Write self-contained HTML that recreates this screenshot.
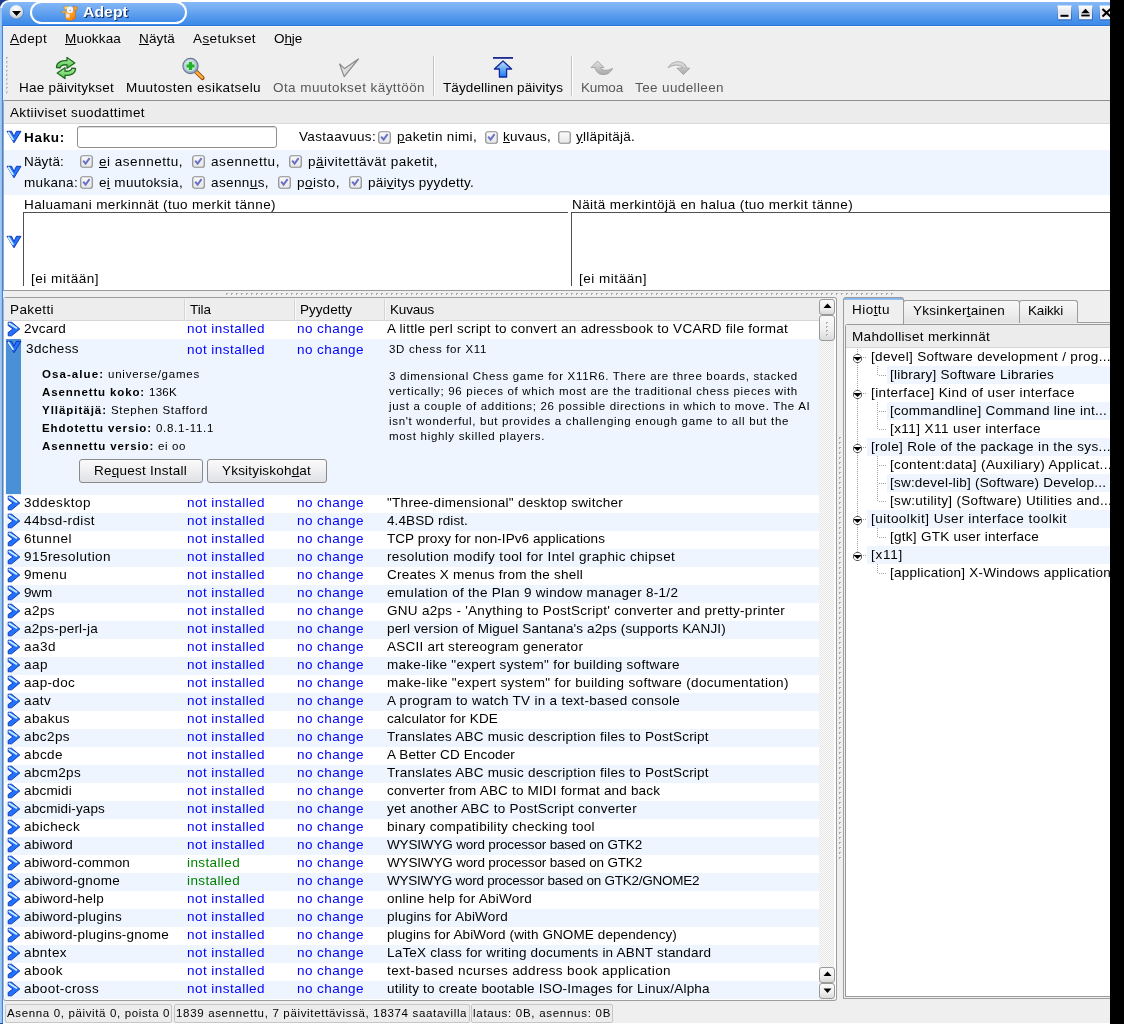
<!DOCTYPE html>
<html><head><meta charset="utf-8"><title>Adept</title>
<style>
html,body{margin:0;padding:0}
body{width:1124px;height:1024px;position:relative;overflow:hidden;background:#000;font-family:"Liberation Sans",sans-serif;color:#000}
.t{position:absolute;white-space:nowrap;line-height:1;will-change:transform}
u{text-decoration:underline;text-underline-offset:1px}
</style></head><body>

<div style="position:absolute;left:0px;top:0px;width:1110px;height:1024px;background:#fff"></div>
<div style="position:absolute;left:0px;top:0px;width:9px;height:9px;background:#1b3c8c"></div>
<div style="position:absolute;left:0px;top:0px;width:1110px;height:1024px;background:#ffffff;border-top-left-radius:9px"></div>
<div style="position:absolute;left:0px;top:8px;width:3px;height:1016px;background:linear-gradient(to right,#a9cdf6 0,#8cbcf4 2px,#3a86e6 2px,#3a86e6 3px)"></div>
<div style="position:absolute;left:2px;top:2px;width:1108px;height:24px;background:linear-gradient(to bottom,#86b8f6 0%,#72acf2 30%,#5a9ced 55%,#4690ea 80%,#3a88e8 100%);border-top-left-radius:7px"></div>
<div style="position:absolute;left:2px;top:25px;width:1108px;height:1px;background:#2e76d6"></div>
<div style="position:absolute;left:3px;top:26px;width:1107px;height:997px;background:#efefef"></div>
<div style="position:absolute;left:3px;top:26px;width:1107px;height:1px;background:#f7f7f7"></div>
<div style="position:absolute;left:0px;top:1023px;width:3px;height:1px;background:#1b4ea6"></div>
<svg style="position:absolute;left:8px;top:4px" width="18" height="18" viewBox="0 0 18 18"><defs><radialGradient id="mb" cx="45%" cy="30%" r="70%"><stop offset="0" stop-color="#ffffff"/><stop offset="0.6" stop-color="#e6e8ec"/><stop offset="1" stop-color="#b8bcc6"/></radialGradient></defs><circle cx="8.6" cy="8.4" r="7.2" fill="#3b6fb8" opacity="0.5"/><circle cx="8.3" cy="7.9" r="6.8" fill="url(#mb)"/><path d="M4 7 L13 7 L8.5 12 Z" fill="#000"/></svg>
<div style="position:absolute;left:30px;top:1px;width:157px;height:23px;box-sizing:border-box;border:2px solid #fff;border-radius:11.5px;background:linear-gradient(to bottom,#84b6f6 0%,#64a3ef 50%,#428ceb 100%)"></div>
<svg style="position:absolute;left:58px;top:2px" width="24" height="20" viewBox="0 0 24 20"><defs><linearGradient id="ob" x1="0" y1="0" x2="1" y2="1"><stop offset="0" stop-color="#ffd070"/><stop offset="0.5" stop-color="#ff9a20"/><stop offset="1" stop-color="#f07000"/></linearGradient></defs><g stroke="#8a5a20" stroke-width="0.5" stroke-opacity="0.6"><path d="M3 9.6 L7.5 8.6 L8.5 11 L3.5 10.6 Z" fill="#ffc050"/><path d="M5.5 5 L9.5 3.5 L10.5 6.5 L7 8 Z" fill="#ffd060"/><path d="M15 3.8 L19.5 5.2 L18.5 9 L16 8.5 Z" fill="#ff9a20"/><path d="M7 9.8 L17.5 8.8 L17.5 16.5 L12.5 19 L7.5 17.2 Z" fill="url(#ob)"/></g><circle cx="12" cy="7.8" r="3.3" fill="#f4f2f8"/><circle cx="12.2" cy="8.4" r="0.8" fill="#b8b0a0"/><rect x="8.3" y="12" width="3.2" height="3.6" fill="#e8e6f6"/></svg>
<div class="t" style="left:83px;top:5px;font-size:14px;font-weight:bold;color:#fff;text-shadow:1px 1px 0 #10306a;transform:scaleX(1.13);transform-origin:0 0">Adept</div>
<svg style="position:absolute;left:1057px;top:5px" width="16" height="16" viewBox="0 0 16 16"><defs><linearGradient id="tbmin" x1="0" y1="0" x2="0" y2="1"><stop offset="0" stop-color="#ffffff"/><stop offset="0.5" stop-color="#e4e6ea"/><stop offset="1" stop-color="#f6f7f9"/></linearGradient></defs><rect x="0.5" y="1" width="14.5" height="14.5" rx="1.5" fill="#244f9a" opacity="0.55"/><path d="M0.5 0.5 L14.5 0.5 L13.8 14.2 L1.2 14.2 Z" fill="url(#tbmin)"/><rect x="3.5" y="9.8" width="8" height="2" fill="#000"/></svg>
<svg style="position:absolute;left:1078px;top:5px" width="16" height="16" viewBox="0 0 16 16"><defs><linearGradient id="tbmax" x1="0" y1="0" x2="0" y2="1"><stop offset="0" stop-color="#ffffff"/><stop offset="0.5" stop-color="#e4e6ea"/><stop offset="1" stop-color="#f6f7f9"/></linearGradient></defs><rect x="0.5" y="1" width="14.5" height="14.5" rx="1.5" fill="#244f9a" opacity="0.55"/><path d="M0.5 0.5 L14.5 0.5 L13.8 14.2 L1.2 14.2 Z" fill="url(#tbmax)"/><path d="M3.3 8.2 L7.5 3.8 L11.7 8.2 Z" fill="#000"/><rect x="3.3" y="9.6" width="8.4" height="1.8" fill="#000"/></svg>
<svg style="position:absolute;left:1099px;top:5px" width="16" height="16" viewBox="0 0 16 16"><defs><linearGradient id="tbclose" x1="0" y1="0" x2="0" y2="1"><stop offset="0" stop-color="#ffffff"/><stop offset="0.5" stop-color="#e4e6ea"/><stop offset="1" stop-color="#f6f7f9"/></linearGradient></defs><rect x="0.5" y="1" width="14.5" height="14.5" rx="1.5" fill="#244f9a" opacity="0.55"/><path d="M0.5 0.5 L14.5 0.5 L13.8 14.2 L1.2 14.2 Z" fill="url(#tbclose)"/><path d="M3.5 4 L11.5 11.5 M11.5 4 L3.5 11.5" stroke="#000" stroke-width="2.2"/></svg>
<div class="t" style="left:10px;top:32px;font-size:13.5px;letter-spacing:0.34px"><u>A</u>dept</div>
<div class="t" style="left:65px;top:32px;font-size:13.5px;letter-spacing:0.18px"><u>M</u>uokkaa</div>
<div class="t" style="left:139px;top:32px;font-size:13.5px;letter-spacing:0.15px"><u>N</u>äytä</div>
<div class="t" style="left:193px;top:32px;font-size:13.5px;letter-spacing:0.41px">A<u>s</u>etukset</div>
<div class="t" style="left:274px;top:32px;font-size:13.5px;letter-spacing:-0.13px">O<u>h</u>je</div>
<svg style="position:absolute;left:6px;top:57px" width="2" height="38" viewBox="0 0 2 38"><defs><pattern id="hd" width="2" height="4.3" patternUnits="userSpaceOnUse"><rect width="2" height="2" fill="#b0b0b0"/><rect x="1" y="1" width="1" height="1" fill="#fff"/></pattern></defs><rect width="2" height="38" fill="url(#hd)"/></svg>
<div class="t" style="left:19px;top:81px;font-size:13.5px;letter-spacing:0.23px">Hae päivitykset</div>
<div class="t" style="left:126px;top:81px;font-size:13.5px;letter-spacing:0.41px">Muutosten esikatselu</div>
<div class="t" style="left:273px;top:81px;font-size:13.5px;letter-spacing:0.43px;color:#585858">Ota muutokset käyttöön</div>
<div class="t" style="left:443px;top:81px;font-size:13.5px;letter-spacing:0.11px">Täydellinen päivitys</div>
<div class="t" style="left:581px;top:81px;font-size:13.5px;letter-spacing:-0.15px;color:#585858">Kumoa</div>
<div class="t" style="left:635px;top:81px;font-size:13.5px;letter-spacing:0.38px;color:#585858">Tee uudelleen</div>
<div style="position:absolute;left:433px;top:56px;width:1px;height:40px;background:#c4c4c4;box-shadow:1px 0 0 #fff"></div>
<div style="position:absolute;left:571px;top:56px;width:1px;height:40px;background:#c4c4c4;box-shadow:1px 0 0 #fff"></div>
<div style="position:absolute;left:3px;top:100px;width:1107px;height:1px;background:#a8a8a8"></div>
<svg style="position:absolute;left:54px;top:56px" width="24" height="24" viewBox="0 0 24 24"><defs><linearGradient id="sy" x1="0" y1="0" x2="0" y2="1"><stop offset="0" stop-color="#b6f0ac"/><stop offset="1" stop-color="#4cc444"/></linearGradient></defs><path d="M2.5 11.5 C2.5 6 8 4.2 13 4.6 L13 1.5 L20.8 7 L13 12.2 L13 8.8 C9 8.6 6.2 9.6 6.2 11.8 Z" fill="url(#sy)" stroke="#1f6a1f" stroke-width="1.3" stroke-linejoin="round"/><path d="M21.5 12.5 C21.5 18 16 19.8 11 19.4 L11 22.5 L3.2 17 L11 11.8 L11 15.2 C15 15.4 17.8 14.4 17.8 12.2 Z" fill="url(#sy)" stroke="#1f6a1f" stroke-width="1.3" stroke-linejoin="round"/></svg>
<svg style="position:absolute;left:181px;top:56px" width="25" height="25" viewBox="0 0 25 25"><defs><radialGradient id="lg" cx="40%" cy="35%" r="65%"><stop offset="0" stop-color="#eef4ff"/><stop offset="1" stop-color="#8ea6c8"/></radialGradient></defs><path d="M14.5 15 L21.5 22" stroke="#9a4a10" stroke-width="4.2" stroke-linecap="round"/><path d="M14.8 15.3 L21.2 21.7" stroke="#ffae3a" stroke-width="2.4" stroke-linecap="round"/><circle cx="9.5" cy="10" r="7.6" fill="url(#lg)" stroke="#6a7a8e" stroke-width="1.2"/><circle cx="9.5" cy="10" r="5.2" fill="#bfe8c8"/><path d="M9.5 6 V14 M5.5 10 H13.5" stroke="#22b02a" stroke-width="3.2"/></svg>
<svg style="position:absolute;left:337px;top:57px" width="24" height="22" viewBox="0 0 24 22"><defs><linearGradient id="ck" x1="0" y1="0" x2="1" y2="1"><stop offset="0" stop-color="#f2f0f2"/><stop offset="1" stop-color="#c8c6c8"/></linearGradient></defs><path d="M2.6 7 L7.6 11.6 L21.4 2 L7.2 19.6 Z" fill="url(#ck)" stroke="#8c8c8c" stroke-width="1.2" stroke-linejoin="round"/></svg>
<svg style="position:absolute;left:492px;top:56px" width="22" height="23" viewBox="0 0 22 23"><defs><linearGradient id="up" x1="0" y1="0" x2="0" y2="1"><stop offset="0" stop-color="#bfe0ff"/><stop offset="1" stop-color="#1a7af0"/></linearGradient></defs><rect x="1" y="1" width="20" height="1.8" fill="#1a2a90"/><path d="M11 5 L19.6 13 L14.6 13 L14.6 21 L7.4 21 L7.4 13 L2.4 13 Z" fill="url(#up)" stroke="#14289a" stroke-width="1.3" stroke-linejoin="round"/></svg>
<svg style="position:absolute;left:590px;top:59px" width="24" height="18" viewBox="0 0 24 18"><defs><linearGradient id="ud" x1="0" y1="0" x2="0" y2="1"><stop offset="0" stop-color="#e4e2e4"/><stop offset="1" stop-color="#a8a8a8"/></linearGradient></defs><path d="M7.5 2 L14 8.6 L10.4 8.6 C12 11.5 16 12.5 22.6 9.4 C20.5 14 16.5 15.8 12.5 15.6 C8 15.2 5.8 12 5 8.6 L1 8.6 Z" fill="url(#ud)" stroke="#9a9a9a" stroke-width="0.8" stroke-linejoin="round"/></svg>
<svg style="position:absolute;left:667px;top:59px" width="24" height="18" viewBox="0 0 24 18"><defs><linearGradient id="rd" x1="0" y1="0" x2="0" y2="1"><stop offset="0" stop-color="#e4e2e4"/><stop offset="1" stop-color="#a8a8a8"/></linearGradient></defs><path d="M1.2 8.6 C4 3 12 0.5 17.5 5 C19 6.5 19.4 8 19.6 9.2 L22.8 9.2 L16.4 15.6 L10 9.2 L15.5 9.2 C14 6 8 4.5 1.2 8.6 Z" fill="url(#rd)" stroke="#9a9a9a" stroke-width="0.8" stroke-linejoin="round"/></svg>
<div style="position:absolute;left:3px;top:100px;width:1107px;height:191px;box-sizing:border-box;border-top:1px solid #8e8e8e;border-left:1px solid #a5a5a5;border-bottom:1px solid #9a9a9a;background:#fff;border-top-left-radius:3px"></div>
<div style="position:absolute;left:4px;top:101px;width:1106px;height:22px;background:#ececec"></div>
<div style="position:absolute;left:4px;top:123px;width:1106px;height:1px;background:#d9d9d9"></div>
<div class="t" style="left:10px;top:106px;font-size:13.5px;letter-spacing:0.37px">Aktiiviset suodattimet</div>
<div style="position:absolute;left:4px;top:150px;width:1106px;height:45px;background:#eef5fe"></div>
<svg style="position:absolute;left:6px;top:130px" width="16" height="14" viewBox="0 0 16 14"><path d="M1 1.3 L5.6 1.3 L8 6.4 L10.4 1.3 L15 1.3 L8 12.8 Z" fill="#1f73ff" stroke="#0e2fb0" stroke-width="0.9" stroke-linejoin="round"/><path d="M2.6 2.4 L6.9 9.2" stroke="#d2f2ff" stroke-width="1.8" stroke-linecap="round"/></svg>
<div class="t" style="left:24px;top:131px;font-size:13.5px;letter-spacing:0.70px;font-weight:bold">Haku:</div>
<div style="position:absolute;left:77px;top:126px;width:200px;height:22px;box-sizing:border-box;border:1px solid #8f8f8f;border-radius:3px;background:#fff;box-shadow:inset 0 1px 0 #dcdcdc"></div>
<div class="t" style="left:299px;top:130px;font-size:13.5px;letter-spacing:0.34px">Vastaavuus:</div>
<svg style="position:absolute;left:378px;top:131px" width="13" height="13" viewBox="0 0 13 13"><defs><linearGradient id="cbg" x1="0" y1="0" x2="0" y2="1"><stop offset="0" stop-color="#fbfbfb"/><stop offset="1" stop-color="#e6e6e6"/></linearGradient></defs><rect x="0.75" y="0.75" width="11.5" height="11.5" rx="2" fill="url(#cbg)" stroke="#8c8c8c" stroke-width="1.2"/><path d="M3.2 5.6 L5.6 8.6 L9.6 3.2" fill="none" stroke="#6a70c8" stroke-width="2"/></svg>
<div class="t" style="left:397px;top:130px;font-size:13.5px;letter-spacing:0.32px"><u>p</u>aketin nimi,</div>
<svg style="position:absolute;left:485px;top:131px" width="13" height="13" viewBox="0 0 13 13"><defs><linearGradient id="cbg" x1="0" y1="0" x2="0" y2="1"><stop offset="0" stop-color="#fbfbfb"/><stop offset="1" stop-color="#e6e6e6"/></linearGradient></defs><rect x="0.75" y="0.75" width="11.5" height="11.5" rx="2" fill="url(#cbg)" stroke="#8c8c8c" stroke-width="1.2"/><path d="M3.2 5.6 L5.6 8.6 L9.6 3.2" fill="none" stroke="#6a70c8" stroke-width="2"/></svg>
<div class="t" style="left:503px;top:130px;font-size:13.5px;letter-spacing:0.21px"><u>k</u>uvaus,</div>
<svg style="position:absolute;left:558px;top:131px" width="13" height="13" viewBox="0 0 13 13"><defs><linearGradient id="cbg" x1="0" y1="0" x2="0" y2="1"><stop offset="0" stop-color="#fbfbfb"/><stop offset="1" stop-color="#e6e6e6"/></linearGradient></defs><rect x="0.75" y="0.75" width="11.5" height="11.5" rx="2" fill="url(#cbg)" stroke="#8c8c8c" stroke-width="1.2"/></svg>
<div class="t" style="left:576px;top:130px;font-size:13.5px;letter-spacing:0.25px"><u>y</u>lläpitäjä.</div>
<svg style="position:absolute;left:6px;top:165px" width="16" height="14" viewBox="0 0 16 14"><path d="M1 1.3 L5.6 1.3 L8 6.4 L10.4 1.3 L15 1.3 L8 12.8 Z" fill="#1f73ff" stroke="#0e2fb0" stroke-width="0.9" stroke-linejoin="round"/><path d="M2.6 2.4 L6.9 9.2" stroke="#d2f2ff" stroke-width="1.8" stroke-linecap="round"/></svg>
<div class="t" style="left:24px;top:155px;font-size:13.5px;letter-spacing:0.16px">Näytä:</div>
<div class="t" style="left:24px;top:176px;font-size:13.5px;letter-spacing:0.32px">mukana:</div>
<svg style="position:absolute;left:80px;top:155px" width="13" height="13" viewBox="0 0 13 13"><defs><linearGradient id="cbg" x1="0" y1="0" x2="0" y2="1"><stop offset="0" stop-color="#fbfbfb"/><stop offset="1" stop-color="#e6e6e6"/></linearGradient></defs><rect x="0.75" y="0.75" width="11.5" height="11.5" rx="2" fill="url(#cbg)" stroke="#8c8c8c" stroke-width="1.2"/><path d="M3.2 5.6 L5.6 8.6 L9.6 3.2" fill="none" stroke="#6a70c8" stroke-width="2"/></svg>
<div class="t" style="left:99px;top:155px;font-size:13.5px;letter-spacing:0.52px"><u>e</u>i asennettu,</div>
<svg style="position:absolute;left:192px;top:155px" width="13" height="13" viewBox="0 0 13 13"><defs><linearGradient id="cbg" x1="0" y1="0" x2="0" y2="1"><stop offset="0" stop-color="#fbfbfb"/><stop offset="1" stop-color="#e6e6e6"/></linearGradient></defs><rect x="0.75" y="0.75" width="11.5" height="11.5" rx="2" fill="url(#cbg)" stroke="#8c8c8c" stroke-width="1.2"/><path d="M3.2 5.6 L5.6 8.6 L9.6 3.2" fill="none" stroke="#6a70c8" stroke-width="2"/></svg>
<div class="t" style="left:211px;top:155px;font-size:13.5px;letter-spacing:0.60px">asennettu,</div>
<svg style="position:absolute;left:289px;top:155px" width="13" height="13" viewBox="0 0 13 13"><defs><linearGradient id="cbg" x1="0" y1="0" x2="0" y2="1"><stop offset="0" stop-color="#fbfbfb"/><stop offset="1" stop-color="#e6e6e6"/></linearGradient></defs><rect x="0.75" y="0.75" width="11.5" height="11.5" rx="2" fill="url(#cbg)" stroke="#8c8c8c" stroke-width="1.2"/><path d="M3.2 5.6 L5.6 8.6 L9.6 3.2" fill="none" stroke="#6a70c8" stroke-width="2"/></svg>
<div class="t" style="left:308px;top:155px;font-size:13.5px;letter-spacing:0.49px">p<u>ä</u>ivitettävät paketit,</div>
<svg style="position:absolute;left:80px;top:176px" width="13" height="13" viewBox="0 0 13 13"><defs><linearGradient id="cbg" x1="0" y1="0" x2="0" y2="1"><stop offset="0" stop-color="#fbfbfb"/><stop offset="1" stop-color="#e6e6e6"/></linearGradient></defs><rect x="0.75" y="0.75" width="11.5" height="11.5" rx="2" fill="url(#cbg)" stroke="#8c8c8c" stroke-width="1.2"/><path d="M3.2 5.6 L5.6 8.6 L9.6 3.2" fill="none" stroke="#6a70c8" stroke-width="2"/></svg>
<div class="t" style="left:99px;top:176px;font-size:13.5px;letter-spacing:0.34px">e<u>i</u> muutoksia,</div>
<svg style="position:absolute;left:192px;top:176px" width="13" height="13" viewBox="0 0 13 13"><defs><linearGradient id="cbg" x1="0" y1="0" x2="0" y2="1"><stop offset="0" stop-color="#fbfbfb"/><stop offset="1" stop-color="#e6e6e6"/></linearGradient></defs><rect x="0.75" y="0.75" width="11.5" height="11.5" rx="2" fill="url(#cbg)" stroke="#8c8c8c" stroke-width="1.2"/><path d="M3.2 5.6 L5.6 8.6 L9.6 3.2" fill="none" stroke="#6a70c8" stroke-width="2"/></svg>
<div class="t" style="left:211px;top:176px;font-size:13.5px;letter-spacing:0.40px">asenn<u>u</u>s,</div>
<svg style="position:absolute;left:278px;top:176px" width="13" height="13" viewBox="0 0 13 13"><defs><linearGradient id="cbg" x1="0" y1="0" x2="0" y2="1"><stop offset="0" stop-color="#fbfbfb"/><stop offset="1" stop-color="#e6e6e6"/></linearGradient></defs><rect x="0.75" y="0.75" width="11.5" height="11.5" rx="2" fill="url(#cbg)" stroke="#8c8c8c" stroke-width="1.2"/><path d="M3.2 5.6 L5.6 8.6 L9.6 3.2" fill="none" stroke="#6a70c8" stroke-width="2"/></svg>
<div class="t" style="left:297px;top:176px;font-size:13.5px;letter-spacing:0.46px">p<u>o</u>isto,</div>
<svg style="position:absolute;left:349px;top:176px" width="13" height="13" viewBox="0 0 13 13"><defs><linearGradient id="cbg" x1="0" y1="0" x2="0" y2="1"><stop offset="0" stop-color="#fbfbfb"/><stop offset="1" stop-color="#e6e6e6"/></linearGradient></defs><rect x="0.75" y="0.75" width="11.5" height="11.5" rx="2" fill="url(#cbg)" stroke="#8c8c8c" stroke-width="1.2"/><path d="M3.2 5.6 L5.6 8.6 L9.6 3.2" fill="none" stroke="#6a70c8" stroke-width="2"/></svg>
<div class="t" style="left:368px;top:176px;font-size:13.5px;letter-spacing:0.23px">päi<u>v</u>itys pyydetty.</div>
<svg style="position:absolute;left:6px;top:235px" width="16" height="14" viewBox="0 0 16 14"><path d="M1 1.3 L5.6 1.3 L8 6.4 L10.4 1.3 L15 1.3 L8 12.8 Z" fill="#1f73ff" stroke="#0e2fb0" stroke-width="0.9" stroke-linejoin="round"/><path d="M2.6 2.4 L6.9 9.2" stroke="#d2f2ff" stroke-width="1.8" stroke-linecap="round"/></svg>
<div class="t" style="left:24px;top:198px;font-size:13.5px;letter-spacing:0.39px">Haluamani merkinnät (tuo merkit tänne)</div>
<div style="position:absolute;left:23px;top:212px;width:545px;height:1px;background:#505050"></div>
<div style="position:absolute;left:23px;top:212px;width:1px;height:74px;background:#505050"></div>
<div class="t" style="left:31px;top:272px;font-size:13.5px;letter-spacing:0.52px">[ei mitään]</div>
<div class="t" style="left:572px;top:198px;font-size:13.5px;letter-spacing:0.42px">Näitä merkintöjä en halua (tuo merkit tänne)</div>
<div style="position:absolute;left:571px;top:212px;width:539px;height:1px;background:#505050"></div>
<div style="position:absolute;left:571px;top:212px;width:1px;height:74px;background:#505050"></div>
<div class="t" style="left:579px;top:272px;font-size:13.5px;letter-spacing:0.52px">[ei mitään]</div>
<svg style="position:absolute;left:226px;top:293px" width="668" height="2" viewBox="0 0 668 2"><defs><pattern id="hdd" width="5" height="2" patternUnits="userSpaceOnUse"><rect width="2" height="2" fill="#a8a8a8"/><rect x="1" y="1" width="1" height="1" fill="#fff"/></pattern></defs><rect width="668" height="2" fill="url(#hdd)"/></svg>
<div style="position:absolute;left:3px;top:297px;width:834px;height:704px;box-sizing:border-box;border:1px solid #9c9c9c;border-left-color:#b8b0ac;border-radius:3px;background:#fff"></div>
<div style="position:absolute;left:4px;top:298px;width:815px;height:22px;background:#ededed"></div>
<div style="position:absolute;left:4px;top:320px;width:815px;height:1px;background:#d6d6d6"></div>
<div style="position:absolute;left:184px;top:299px;width:1px;height:21px;background:#d4d4d4;box-shadow:1px 0 0 #fafafa"></div>
<div style="position:absolute;left:294px;top:299px;width:1px;height:21px;background:#d4d4d4;box-shadow:1px 0 0 #fafafa"></div>
<div style="position:absolute;left:384px;top:299px;width:1px;height:21px;background:#d4d4d4;box-shadow:1px 0 0 #fafafa"></div>
<div class="t" style="left:10px;top:303px;font-size:13.5px;letter-spacing:0.39px">Paketti</div>
<div class="t" style="left:190px;top:303px;font-size:13.5px;letter-spacing:-0.06px">Tila</div>
<div class="t" style="left:300px;top:303px;font-size:13.5px;letter-spacing:0.03px">Pyydetty</div>
<div class="t" style="left:390px;top:303px;font-size:13.5px;letter-spacing:-0.17px">Kuvaus</div>
<svg style="position:absolute;left:7px;top:321px" width="14" height="16" viewBox="0 0 14 16"><path d="M1.2 1.2 L4.6 1.2 L12.8 8 L4.6 14.8 L1.2 14.8 L1.2 11.4 L6 8 L1.2 4.6 Z" fill="#1f73ff" stroke="#0e2fb0" stroke-width="0.9" stroke-linejoin="round"/><path d="M2.3 2.5 L9.4 7" stroke="#c8f0ff" stroke-width="1.8" stroke-linecap="round"/></svg>
<div class="t" style="left:24px;top:322px;font-size:13.5px;letter-spacing:0.25px">2vcard</div>
<div class="t" style="left:187px;top:322px;font-size:13.5px;letter-spacing:0.46px;color:#0000ff">not installed</div>
<div class="t" style="left:297px;top:322px;font-size:13.5px;letter-spacing:0.44px;color:#0000ff">no change</div>
<div class="t" style="left:387px;top:322px;font-size:13.5px;letter-spacing:0.28px">A little perl script to convert an adressbook to VCARD file format</div>
<div style="position:absolute;left:5px;top:339px;width:814px;height:156px;background:#eef5fe"></div>
<div style="position:absolute;left:6px;top:339px;width:15px;height:155px;background:#4a90d6"></div>
<svg style="position:absolute;left:6px;top:340px" width="16" height="14" viewBox="0 0 16 14"><path d="M1 1.3 L5.6 1.3 L8 6.4 L10.4 1.3 L15 1.3 L8 12.8 Z" fill="#1f73ff" stroke="#0e2fb0" stroke-width="0.9" stroke-linejoin="round"/><path d="M2.6 2.4 L6.9 9.2" stroke="#d2f2ff" stroke-width="1.8" stroke-linecap="round"/></svg>
<div class="t" style="left:26px;top:342px;font-size:13.5px;letter-spacing:0.39px">3dchess</div>
<div class="t" style="left:187px;top:343px;font-size:13.5px;letter-spacing:0.46px;color:#0000ff">not installed</div>
<div class="t" style="left:297px;top:343px;font-size:13.5px;letter-spacing:0.44px;color:#0000ff">no change</div>
<div class="t" style="left:389px;top:344px;font-size:11.5px;letter-spacing:0.67px">3D chess for X11</div>
<div class="t" style="left:389px;top:371px;font-size:11.5px;letter-spacing:0.69px">3 dimensional Chess game for X11R6. There are three boards, stacked</div>
<div class="t" style="left:389px;top:386px;font-size:11.5px;letter-spacing:0.68px">vertically; 96 pieces of which most are the traditional chess pieces with</div>
<div class="t" style="left:389px;top:401px;font-size:11.5px;letter-spacing:0.66px">just a couple of additions; 26 possible directions in which to move. The AI</div>
<div class="t" style="left:389px;top:416px;font-size:11.5px;letter-spacing:0.68px">isn&#x27;t wonderful, but provides a challenging enough game to all but the</div>
<div class="t" style="left:389px;top:431px;font-size:11.5px;letter-spacing:0.69px">most highly skilled players.</div>
<div class="t" style="left:42px;top:369px;font-size:11.5px;letter-spacing:1.07px;font-weight:bold">Osa-alue:</div>
<div class="t" style="left:108.0px;top:369px;font-size:11.5px;letter-spacing:0.77px">universe/games</div>
<div class="t" style="left:42px;top:387px;font-size:11.5px;letter-spacing:0.86px;font-weight:bold">Asennettu koko:</div>
<div class="t" style="left:149.0px;top:387px;font-size:11.5px;letter-spacing:0.29px">136K</div>
<div class="t" style="left:42px;top:405px;font-size:11.5px;letter-spacing:0.97px;font-weight:bold">Ylläpitäjä:</div>
<div class="t" style="left:111.0px;top:405px;font-size:11.5px;letter-spacing:0.68px">Stephen Stafford</div>
<div class="t" style="left:42px;top:423px;font-size:11.5px;letter-spacing:0.91px;font-weight:bold">Ehdotettu versio:</div>
<div class="t" style="left:156.0px;top:423px;font-size:11.5px;letter-spacing:0.71px">0.8.1-11.1</div>
<div class="t" style="left:42px;top:441px;font-size:11.5px;letter-spacing:0.88px;font-weight:bold">Asennettu versio:</div>
<div class="t" style="left:158.0px;top:441px;font-size:11.5px;letter-spacing:0.61px">ei oo</div>
<div style="position:absolute;left:79px;top:459px;width:124px;height:24px;box-sizing:border-box;border:1px solid #8a8a8a;border-radius:3px;background:linear-gradient(to bottom,#fbfbfb 0%,#f0f0f2 45%,#dfe1e6 100%)"></div>
<div class="t" style="left:94px;top:464px;font-size:13.5px;letter-spacing:0.25px">Re<u>q</u>uest Install</div>
<div style="position:absolute;left:207px;top:459px;width:120px;height:24px;box-sizing:border-box;border:1px solid #8a8a8a;border-radius:3px;background:linear-gradient(to bottom,#fbfbfb 0%,#f0f0f2 45%,#dfe1e6 100%)"></div>
<div class="t" style="left:222px;top:464px;font-size:13.5px;letter-spacing:0.19px">Yksityiskoh<u>d</u>at</div>
<svg style="position:absolute;left:7px;top:495px" width="14" height="16" viewBox="0 0 14 16"><path d="M1.2 1.2 L4.6 1.2 L12.8 8 L4.6 14.8 L1.2 14.8 L1.2 11.4 L6 8 L1.2 4.6 Z" fill="#1f73ff" stroke="#0e2fb0" stroke-width="0.9" stroke-linejoin="round"/><path d="M2.3 2.5 L9.4 7" stroke="#c8f0ff" stroke-width="1.8" stroke-linecap="round"/></svg>
<div class="t" style="left:24px;top:496px;font-size:13.5px;letter-spacing:0.52px">3ddesktop</div>
<div class="t" style="left:187px;top:496px;font-size:13.5px;letter-spacing:0.46px;color:#0000ff">not installed</div>
<div class="t" style="left:297px;top:496px;font-size:13.5px;letter-spacing:0.44px;color:#0000ff">no change</div>
<div class="t" style="left:387px;top:496px;font-size:13.5px;letter-spacing:0.29px">&quot;Three-dimensional&quot; desktop switcher</div>
<div style="position:absolute;left:5px;top:513px;width:814px;height:18px;background:#eef5fe"></div>
<svg style="position:absolute;left:7px;top:513px" width="14" height="16" viewBox="0 0 14 16"><path d="M1.2 1.2 L4.6 1.2 L12.8 8 L4.6 14.8 L1.2 14.8 L1.2 11.4 L6 8 L1.2 4.6 Z" fill="#1f73ff" stroke="#0e2fb0" stroke-width="0.9" stroke-linejoin="round"/><path d="M2.3 2.5 L9.4 7" stroke="#c8f0ff" stroke-width="1.8" stroke-linecap="round"/></svg>
<div class="t" style="left:24px;top:514px;font-size:13.5px;letter-spacing:0.38px">44bsd-rdist</div>
<div class="t" style="left:187px;top:514px;font-size:13.5px;letter-spacing:0.46px;color:#0000ff">not installed</div>
<div class="t" style="left:297px;top:514px;font-size:13.5px;letter-spacing:0.44px;color:#0000ff">no change</div>
<div class="t" style="left:387px;top:514px;font-size:13.5px;letter-spacing:0.11px">4.4BSD rdist.</div>
<svg style="position:absolute;left:7px;top:531px" width="14" height="16" viewBox="0 0 14 16"><path d="M1.2 1.2 L4.6 1.2 L12.8 8 L4.6 14.8 L1.2 14.8 L1.2 11.4 L6 8 L1.2 4.6 Z" fill="#1f73ff" stroke="#0e2fb0" stroke-width="0.9" stroke-linejoin="round"/><path d="M2.3 2.5 L9.4 7" stroke="#c8f0ff" stroke-width="1.8" stroke-linecap="round"/></svg>
<div class="t" style="left:24px;top:532px;font-size:13.5px;letter-spacing:0.53px">6tunnel</div>
<div class="t" style="left:187px;top:532px;font-size:13.5px;letter-spacing:0.46px;color:#0000ff">not installed</div>
<div class="t" style="left:297px;top:532px;font-size:13.5px;letter-spacing:0.44px;color:#0000ff">no change</div>
<div class="t" style="left:387px;top:532px;font-size:13.5px;letter-spacing:0.06px">TCP proxy for non-IPv6 applications</div>
<div style="position:absolute;left:5px;top:549px;width:814px;height:18px;background:#eef5fe"></div>
<svg style="position:absolute;left:7px;top:549px" width="14" height="16" viewBox="0 0 14 16"><path d="M1.2 1.2 L4.6 1.2 L12.8 8 L4.6 14.8 L1.2 14.8 L1.2 11.4 L6 8 L1.2 4.6 Z" fill="#1f73ff" stroke="#0e2fb0" stroke-width="0.9" stroke-linejoin="round"/><path d="M2.3 2.5 L9.4 7" stroke="#c8f0ff" stroke-width="1.8" stroke-linecap="round"/></svg>
<div class="t" style="left:24px;top:550px;font-size:13.5px;letter-spacing:0.46px">915resolution</div>
<div class="t" style="left:187px;top:550px;font-size:13.5px;letter-spacing:0.46px;color:#0000ff">not installed</div>
<div class="t" style="left:297px;top:550px;font-size:13.5px;letter-spacing:0.44px;color:#0000ff">no change</div>
<div class="t" style="left:387px;top:550px;font-size:13.5px;letter-spacing:0.36px">resolution modify tool for Intel graphic chipset</div>
<svg style="position:absolute;left:7px;top:567px" width="14" height="16" viewBox="0 0 14 16"><path d="M1.2 1.2 L4.6 1.2 L12.8 8 L4.6 14.8 L1.2 14.8 L1.2 11.4 L6 8 L1.2 4.6 Z" fill="#1f73ff" stroke="#0e2fb0" stroke-width="0.9" stroke-linejoin="round"/><path d="M2.3 2.5 L9.4 7" stroke="#c8f0ff" stroke-width="1.8" stroke-linecap="round"/></svg>
<div class="t" style="left:24px;top:568px;font-size:13.5px;letter-spacing:0.35px">9menu</div>
<div class="t" style="left:187px;top:568px;font-size:13.5px;letter-spacing:0.46px;color:#0000ff">not installed</div>
<div class="t" style="left:297px;top:568px;font-size:13.5px;letter-spacing:0.44px;color:#0000ff">no change</div>
<div class="t" style="left:387px;top:568px;font-size:13.5px;letter-spacing:0.23px">Creates X menus from the shell</div>
<div style="position:absolute;left:5px;top:585px;width:814px;height:18px;background:#eef5fe"></div>
<svg style="position:absolute;left:7px;top:585px" width="14" height="16" viewBox="0 0 14 16"><path d="M1.2 1.2 L4.6 1.2 L12.8 8 L4.6 14.8 L1.2 14.8 L1.2 11.4 L6 8 L1.2 4.6 Z" fill="#1f73ff" stroke="#0e2fb0" stroke-width="0.9" stroke-linejoin="round"/><path d="M2.3 2.5 L9.4 7" stroke="#c8f0ff" stroke-width="1.8" stroke-linecap="round"/></svg>
<div class="t" style="left:24px;top:586px;font-size:13.5px;letter-spacing:-0.17px">9wm</div>
<div class="t" style="left:187px;top:586px;font-size:13.5px;letter-spacing:0.46px;color:#0000ff">not installed</div>
<div class="t" style="left:297px;top:586px;font-size:13.5px;letter-spacing:0.44px;color:#0000ff">no change</div>
<div class="t" style="left:387px;top:586px;font-size:13.5px;letter-spacing:0.29px">emulation of the Plan 9 window manager 8-1/2</div>
<svg style="position:absolute;left:7px;top:603px" width="14" height="16" viewBox="0 0 14 16"><path d="M1.2 1.2 L4.6 1.2 L12.8 8 L4.6 14.8 L1.2 14.8 L1.2 11.4 L6 8 L1.2 4.6 Z" fill="#1f73ff" stroke="#0e2fb0" stroke-width="0.9" stroke-linejoin="round"/><path d="M2.3 2.5 L9.4 7" stroke="#c8f0ff" stroke-width="1.8" stroke-linecap="round"/></svg>
<div class="t" style="left:24px;top:604px;font-size:13.5px;letter-spacing:0.43px">a2ps</div>
<div class="t" style="left:187px;top:604px;font-size:13.5px;letter-spacing:0.46px;color:#0000ff">not installed</div>
<div class="t" style="left:297px;top:604px;font-size:13.5px;letter-spacing:0.44px;color:#0000ff">no change</div>
<div class="t" style="left:387px;top:604px;font-size:13.5px;letter-spacing:0.29px">GNU a2ps - &#x27;Anything to PostScript&#x27; converter and pretty-printer</div>
<div style="position:absolute;left:5px;top:621px;width:814px;height:18px;background:#eef5fe"></div>
<svg style="position:absolute;left:7px;top:621px" width="14" height="16" viewBox="0 0 14 16"><path d="M1.2 1.2 L4.6 1.2 L12.8 8 L4.6 14.8 L1.2 14.8 L1.2 11.4 L6 8 L1.2 4.6 Z" fill="#1f73ff" stroke="#0e2fb0" stroke-width="0.9" stroke-linejoin="round"/><path d="M2.3 2.5 L9.4 7" stroke="#c8f0ff" stroke-width="1.8" stroke-linecap="round"/></svg>
<div class="t" style="left:24px;top:622px;font-size:13.5px;letter-spacing:0.23px">a2ps-perl-ja</div>
<div class="t" style="left:187px;top:622px;font-size:13.5px;letter-spacing:0.46px;color:#0000ff">not installed</div>
<div class="t" style="left:297px;top:622px;font-size:13.5px;letter-spacing:0.44px;color:#0000ff">no change</div>
<div class="t" style="left:387px;top:622px;font-size:13.5px;letter-spacing:0.14px">perl version of Miguel Santana&#x27;s a2ps (supports KANJI)</div>
<svg style="position:absolute;left:7px;top:639px" width="14" height="16" viewBox="0 0 14 16"><path d="M1.2 1.2 L4.6 1.2 L12.8 8 L4.6 14.8 L1.2 14.8 L1.2 11.4 L6 8 L1.2 4.6 Z" fill="#1f73ff" stroke="#0e2fb0" stroke-width="0.9" stroke-linejoin="round"/><path d="M2.3 2.5 L9.4 7" stroke="#c8f0ff" stroke-width="1.8" stroke-linecap="round"/></svg>
<div class="t" style="left:24px;top:640px;font-size:13.5px;letter-spacing:0.49px">aa3d</div>
<div class="t" style="left:187px;top:640px;font-size:13.5px;letter-spacing:0.46px;color:#0000ff">not installed</div>
<div class="t" style="left:297px;top:640px;font-size:13.5px;letter-spacing:0.44px;color:#0000ff">no change</div>
<div class="t" style="left:387px;top:640px;font-size:13.5px;letter-spacing:0.26px">ASCII art stereogram generator</div>
<div style="position:absolute;left:5px;top:657px;width:814px;height:18px;background:#eef5fe"></div>
<svg style="position:absolute;left:7px;top:657px" width="14" height="16" viewBox="0 0 14 16"><path d="M1.2 1.2 L4.6 1.2 L12.8 8 L4.6 14.8 L1.2 14.8 L1.2 11.4 L6 8 L1.2 4.6 Z" fill="#1f73ff" stroke="#0e2fb0" stroke-width="0.9" stroke-linejoin="round"/><path d="M2.3 2.5 L9.4 7" stroke="#c8f0ff" stroke-width="1.8" stroke-linecap="round"/></svg>
<div class="t" style="left:24px;top:658px;font-size:13.5px;letter-spacing:0.49px">aap</div>
<div class="t" style="left:187px;top:658px;font-size:13.5px;letter-spacing:0.46px;color:#0000ff">not installed</div>
<div class="t" style="left:297px;top:658px;font-size:13.5px;letter-spacing:0.44px;color:#0000ff">no change</div>
<div class="t" style="left:387px;top:658px;font-size:13.5px;letter-spacing:0.28px">make-like &quot;expert system&quot; for building software</div>
<svg style="position:absolute;left:7px;top:675px" width="14" height="16" viewBox="0 0 14 16"><path d="M1.2 1.2 L4.6 1.2 L12.8 8 L4.6 14.8 L1.2 14.8 L1.2 11.4 L6 8 L1.2 4.6 Z" fill="#1f73ff" stroke="#0e2fb0" stroke-width="0.9" stroke-linejoin="round"/><path d="M2.3 2.5 L9.4 7" stroke="#c8f0ff" stroke-width="1.8" stroke-linecap="round"/></svg>
<div class="t" style="left:24px;top:676px;font-size:13.5px;letter-spacing:0.32px">aap-doc</div>
<div class="t" style="left:187px;top:676px;font-size:13.5px;letter-spacing:0.46px;color:#0000ff">not installed</div>
<div class="t" style="left:297px;top:676px;font-size:13.5px;letter-spacing:0.44px;color:#0000ff">no change</div>
<div class="t" style="left:387px;top:676px;font-size:13.5px;letter-spacing:0.33px">make-like &quot;expert system&quot; for building software (documentation)</div>
<div style="position:absolute;left:5px;top:693px;width:814px;height:18px;background:#eef5fe"></div>
<svg style="position:absolute;left:7px;top:693px" width="14" height="16" viewBox="0 0 14 16"><path d="M1.2 1.2 L4.6 1.2 L12.8 8 L4.6 14.8 L1.2 14.8 L1.2 11.4 L6 8 L1.2 4.6 Z" fill="#1f73ff" stroke="#0e2fb0" stroke-width="0.9" stroke-linejoin="round"/><path d="M2.3 2.5 L9.4 7" stroke="#c8f0ff" stroke-width="1.8" stroke-linecap="round"/></svg>
<div class="t" style="left:24px;top:694px;font-size:13.5px;letter-spacing:0.37px">aatv</div>
<div class="t" style="left:187px;top:694px;font-size:13.5px;letter-spacing:0.46px;color:#0000ff">not installed</div>
<div class="t" style="left:297px;top:694px;font-size:13.5px;letter-spacing:0.44px;color:#0000ff">no change</div>
<div class="t" style="left:387px;top:694px;font-size:13.5px;letter-spacing:0.30px">A program to watch TV in a text-based console</div>
<svg style="position:absolute;left:7px;top:711px" width="14" height="16" viewBox="0 0 14 16"><path d="M1.2 1.2 L4.6 1.2 L12.8 8 L4.6 14.8 L1.2 14.8 L1.2 11.4 L6 8 L1.2 4.6 Z" fill="#1f73ff" stroke="#0e2fb0" stroke-width="0.9" stroke-linejoin="round"/><path d="M2.3 2.5 L9.4 7" stroke="#c8f0ff" stroke-width="1.8" stroke-linecap="round"/></svg>
<div class="t" style="left:24px;top:712px;font-size:13.5px;letter-spacing:0.41px">abakus</div>
<div class="t" style="left:187px;top:712px;font-size:13.5px;letter-spacing:0.46px;color:#0000ff">not installed</div>
<div class="t" style="left:297px;top:712px;font-size:13.5px;letter-spacing:0.44px;color:#0000ff">no change</div>
<div class="t" style="left:387px;top:712px;font-size:13.5px;letter-spacing:0.12px">calculator for KDE</div>
<div style="position:absolute;left:5px;top:729px;width:814px;height:18px;background:#eef5fe"></div>
<svg style="position:absolute;left:7px;top:729px" width="14" height="16" viewBox="0 0 14 16"><path d="M1.2 1.2 L4.6 1.2 L12.8 8 L4.6 14.8 L1.2 14.8 L1.2 11.4 L6 8 L1.2 4.6 Z" fill="#1f73ff" stroke="#0e2fb0" stroke-width="0.9" stroke-linejoin="round"/><path d="M2.3 2.5 L9.4 7" stroke="#c8f0ff" stroke-width="1.8" stroke-linecap="round"/></svg>
<div class="t" style="left:24px;top:730px;font-size:13.5px;letter-spacing:0.41px">abc2ps</div>
<div class="t" style="left:187px;top:730px;font-size:13.5px;letter-spacing:0.46px;color:#0000ff">not installed</div>
<div class="t" style="left:297px;top:730px;font-size:13.5px;letter-spacing:0.44px;color:#0000ff">no change</div>
<div class="t" style="left:387px;top:730px;font-size:13.5px;letter-spacing:0.24px">Translates ABC music description files to PostScript</div>
<svg style="position:absolute;left:7px;top:747px" width="14" height="16" viewBox="0 0 14 16"><path d="M1.2 1.2 L4.6 1.2 L12.8 8 L4.6 14.8 L1.2 14.8 L1.2 11.4 L6 8 L1.2 4.6 Z" fill="#1f73ff" stroke="#0e2fb0" stroke-width="0.9" stroke-linejoin="round"/><path d="M2.3 2.5 L9.4 7" stroke="#c8f0ff" stroke-width="1.8" stroke-linecap="round"/></svg>
<div class="t" style="left:24px;top:748px;font-size:13.5px;letter-spacing:0.44px">abcde</div>
<div class="t" style="left:187px;top:748px;font-size:13.5px;letter-spacing:0.46px;color:#0000ff">not installed</div>
<div class="t" style="left:297px;top:748px;font-size:13.5px;letter-spacing:0.44px;color:#0000ff">no change</div>
<div class="t" style="left:387px;top:748px;font-size:13.5px;letter-spacing:0.14px">A Better CD Encoder</div>
<div style="position:absolute;left:5px;top:765px;width:814px;height:18px;background:#eef5fe"></div>
<svg style="position:absolute;left:7px;top:765px" width="14" height="16" viewBox="0 0 14 16"><path d="M1.2 1.2 L4.6 1.2 L12.8 8 L4.6 14.8 L1.2 14.8 L1.2 11.4 L6 8 L1.2 4.6 Z" fill="#1f73ff" stroke="#0e2fb0" stroke-width="0.9" stroke-linejoin="round"/><path d="M2.3 2.5 L9.4 7" stroke="#c8f0ff" stroke-width="1.8" stroke-linecap="round"/></svg>
<div class="t" style="left:24px;top:766px;font-size:13.5px;letter-spacing:0.32px">abcm2ps</div>
<div class="t" style="left:187px;top:766px;font-size:13.5px;letter-spacing:0.46px;color:#0000ff">not installed</div>
<div class="t" style="left:297px;top:766px;font-size:13.5px;letter-spacing:0.44px;color:#0000ff">no change</div>
<div class="t" style="left:387px;top:766px;font-size:13.5px;letter-spacing:0.24px">Translates ABC music description files to PostScript</div>
<svg style="position:absolute;left:7px;top:783px" width="14" height="16" viewBox="0 0 14 16"><path d="M1.2 1.2 L4.6 1.2 L12.8 8 L4.6 14.8 L1.2 14.8 L1.2 11.4 L6 8 L1.2 4.6 Z" fill="#1f73ff" stroke="#0e2fb0" stroke-width="0.9" stroke-linejoin="round"/><path d="M2.3 2.5 L9.4 7" stroke="#c8f0ff" stroke-width="1.8" stroke-linecap="round"/></svg>
<div class="t" style="left:24px;top:784px;font-size:13.5px;letter-spacing:0.21px">abcmidi</div>
<div class="t" style="left:187px;top:784px;font-size:13.5px;letter-spacing:0.46px;color:#0000ff">not installed</div>
<div class="t" style="left:297px;top:784px;font-size:13.5px;letter-spacing:0.44px;color:#0000ff">no change</div>
<div class="t" style="left:387px;top:784px;font-size:13.5px;letter-spacing:0.18px">converter from ABC to MIDI format and back</div>
<div style="position:absolute;left:5px;top:801px;width:814px;height:18px;background:#eef5fe"></div>
<svg style="position:absolute;left:7px;top:801px" width="14" height="16" viewBox="0 0 14 16"><path d="M1.2 1.2 L4.6 1.2 L12.8 8 L4.6 14.8 L1.2 14.8 L1.2 11.4 L6 8 L1.2 4.6 Z" fill="#1f73ff" stroke="#0e2fb0" stroke-width="0.9" stroke-linejoin="round"/><path d="M2.3 2.5 L9.4 7" stroke="#c8f0ff" stroke-width="1.8" stroke-linecap="round"/></svg>
<div class="t" style="left:24px;top:802px;font-size:13.5px;letter-spacing:0.12px">abcmidi-yaps</div>
<div class="t" style="left:187px;top:802px;font-size:13.5px;letter-spacing:0.46px;color:#0000ff">not installed</div>
<div class="t" style="left:297px;top:802px;font-size:13.5px;letter-spacing:0.44px;color:#0000ff">no change</div>
<div class="t" style="left:387px;top:802px;font-size:13.5px;letter-spacing:0.29px">yet another ABC to PostScript converter</div>
<svg style="position:absolute;left:7px;top:819px" width="14" height="16" viewBox="0 0 14 16"><path d="M1.2 1.2 L4.6 1.2 L12.8 8 L4.6 14.8 L1.2 14.8 L1.2 11.4 L6 8 L1.2 4.6 Z" fill="#1f73ff" stroke="#0e2fb0" stroke-width="0.9" stroke-linejoin="round"/><path d="M2.3 2.5 L9.4 7" stroke="#c8f0ff" stroke-width="1.8" stroke-linecap="round"/></svg>
<div class="t" style="left:24px;top:820px;font-size:13.5px;letter-spacing:0.34px">abicheck</div>
<div class="t" style="left:187px;top:820px;font-size:13.5px;letter-spacing:0.46px;color:#0000ff">not installed</div>
<div class="t" style="left:297px;top:820px;font-size:13.5px;letter-spacing:0.44px;color:#0000ff">no change</div>
<div class="t" style="left:387px;top:820px;font-size:13.5px;letter-spacing:0.31px">binary compatibility checking tool</div>
<div style="position:absolute;left:5px;top:837px;width:814px;height:18px;background:#eef5fe"></div>
<svg style="position:absolute;left:7px;top:837px" width="14" height="16" viewBox="0 0 14 16"><path d="M1.2 1.2 L4.6 1.2 L12.8 8 L4.6 14.8 L1.2 14.8 L1.2 11.4 L6 8 L1.2 4.6 Z" fill="#1f73ff" stroke="#0e2fb0" stroke-width="0.9" stroke-linejoin="round"/><path d="M2.3 2.5 L9.4 7" stroke="#c8f0ff" stroke-width="1.8" stroke-linecap="round"/></svg>
<div class="t" style="left:24px;top:838px;font-size:13.5px;letter-spacing:0.25px">abiword</div>
<div class="t" style="left:187px;top:838px;font-size:13.5px;letter-spacing:0.46px;color:#0000ff">not installed</div>
<div class="t" style="left:297px;top:838px;font-size:13.5px;letter-spacing:0.44px;color:#0000ff">no change</div>
<div class="t" style="left:387px;top:838px;font-size:13.5px;letter-spacing:-0.17px">WYSIWYG word processor based on GTK2</div>
<svg style="position:absolute;left:7px;top:855px" width="14" height="16" viewBox="0 0 14 16"><path d="M1.2 1.2 L4.6 1.2 L12.8 8 L4.6 14.8 L1.2 14.8 L1.2 11.4 L6 8 L1.2 4.6 Z" fill="#1f73ff" stroke="#0e2fb0" stroke-width="0.9" stroke-linejoin="round"/><path d="M2.3 2.5 L9.4 7" stroke="#c8f0ff" stroke-width="1.8" stroke-linecap="round"/></svg>
<div class="t" style="left:24px;top:856px;font-size:13.5px;letter-spacing:0.18px">abiword-common</div>
<div class="t" style="left:187px;top:856px;font-size:13.5px;letter-spacing:0.39px;color:#008000">installed</div>
<div class="t" style="left:297px;top:856px;font-size:13.5px;letter-spacing:0.44px;color:#0000ff">no change</div>
<div class="t" style="left:387px;top:856px;font-size:13.5px;letter-spacing:-0.17px">WYSIWYG word processor based on GTK2</div>
<div style="position:absolute;left:5px;top:873px;width:814px;height:18px;background:#eef5fe"></div>
<svg style="position:absolute;left:7px;top:873px" width="14" height="16" viewBox="0 0 14 16"><path d="M1.2 1.2 L4.6 1.2 L12.8 8 L4.6 14.8 L1.2 14.8 L1.2 11.4 L6 8 L1.2 4.6 Z" fill="#1f73ff" stroke="#0e2fb0" stroke-width="0.9" stroke-linejoin="round"/><path d="M2.3 2.5 L9.4 7" stroke="#c8f0ff" stroke-width="1.8" stroke-linecap="round"/></svg>
<div class="t" style="left:24px;top:874px;font-size:13.5px;letter-spacing:0.23px">abiword-gnome</div>
<div class="t" style="left:187px;top:874px;font-size:13.5px;letter-spacing:0.39px;color:#008000">installed</div>
<div class="t" style="left:297px;top:874px;font-size:13.5px;letter-spacing:0.44px;color:#0000ff">no change</div>
<div class="t" style="left:387px;top:874px;font-size:13.5px;letter-spacing:-0.26px">WYSIWYG word processor based on GTK2/GNOME2</div>
<svg style="position:absolute;left:7px;top:891px" width="14" height="16" viewBox="0 0 14 16"><path d="M1.2 1.2 L4.6 1.2 L12.8 8 L4.6 14.8 L1.2 14.8 L1.2 11.4 L6 8 L1.2 4.6 Z" fill="#1f73ff" stroke="#0e2fb0" stroke-width="0.9" stroke-linejoin="round"/><path d="M2.3 2.5 L9.4 7" stroke="#c8f0ff" stroke-width="1.8" stroke-linecap="round"/></svg>
<div class="t" style="left:24px;top:892px;font-size:13.5px;letter-spacing:0.23px">abiword-help</div>
<div class="t" style="left:187px;top:892px;font-size:13.5px;letter-spacing:0.46px;color:#0000ff">not installed</div>
<div class="t" style="left:297px;top:892px;font-size:13.5px;letter-spacing:0.44px;color:#0000ff">no change</div>
<div class="t" style="left:387px;top:892px;font-size:13.5px;letter-spacing:0.25px">online help for AbiWord</div>
<div style="position:absolute;left:5px;top:909px;width:814px;height:18px;background:#eef5fe"></div>
<svg style="position:absolute;left:7px;top:909px" width="14" height="16" viewBox="0 0 14 16"><path d="M1.2 1.2 L4.6 1.2 L12.8 8 L4.6 14.8 L1.2 14.8 L1.2 11.4 L6 8 L1.2 4.6 Z" fill="#1f73ff" stroke="#0e2fb0" stroke-width="0.9" stroke-linejoin="round"/><path d="M2.3 2.5 L9.4 7" stroke="#c8f0ff" stroke-width="1.8" stroke-linecap="round"/></svg>
<div class="t" style="left:24px;top:910px;font-size:13.5px;letter-spacing:0.23px">abiword-plugins</div>
<div class="t" style="left:187px;top:910px;font-size:13.5px;letter-spacing:0.46px;color:#0000ff">not installed</div>
<div class="t" style="left:297px;top:910px;font-size:13.5px;letter-spacing:0.44px;color:#0000ff">no change</div>
<div class="t" style="left:387px;top:910px;font-size:13.5px;letter-spacing:0.22px">plugins for AbiWord</div>
<svg style="position:absolute;left:7px;top:927px" width="14" height="16" viewBox="0 0 14 16"><path d="M1.2 1.2 L4.6 1.2 L12.8 8 L4.6 14.8 L1.2 14.8 L1.2 11.4 L6 8 L1.2 4.6 Z" fill="#1f73ff" stroke="#0e2fb0" stroke-width="0.9" stroke-linejoin="round"/><path d="M2.3 2.5 L9.4 7" stroke="#c8f0ff" stroke-width="1.8" stroke-linecap="round"/></svg>
<div class="t" style="left:24px;top:928px;font-size:13.5px;letter-spacing:0.22px">abiword-plugins-gnome</div>
<div class="t" style="left:187px;top:928px;font-size:13.5px;letter-spacing:0.46px;color:#0000ff">not installed</div>
<div class="t" style="left:297px;top:928px;font-size:13.5px;letter-spacing:0.44px;color:#0000ff">no change</div>
<div class="t" style="left:387px;top:928px;font-size:13.5px;letter-spacing:0.10px">plugins for AbiWord (with GNOME dependency)</div>
<div style="position:absolute;left:5px;top:945px;width:814px;height:18px;background:#eef5fe"></div>
<svg style="position:absolute;left:7px;top:945px" width="14" height="16" viewBox="0 0 14 16"><path d="M1.2 1.2 L4.6 1.2 L12.8 8 L4.6 14.8 L1.2 14.8 L1.2 11.4 L6 8 L1.2 4.6 Z" fill="#1f73ff" stroke="#0e2fb0" stroke-width="0.9" stroke-linejoin="round"/><path d="M2.3 2.5 L9.4 7" stroke="#c8f0ff" stroke-width="1.8" stroke-linecap="round"/></svg>
<div class="t" style="left:24px;top:946px;font-size:13.5px;letter-spacing:0.41px">abntex</div>
<div class="t" style="left:187px;top:946px;font-size:13.5px;letter-spacing:0.46px;color:#0000ff">not installed</div>
<div class="t" style="left:297px;top:946px;font-size:13.5px;letter-spacing:0.44px;color:#0000ff">no change</div>
<div class="t" style="left:387px;top:946px;font-size:13.5px;letter-spacing:0.20px">LaTeX class for writing documents in ABNT standard</div>
<svg style="position:absolute;left:7px;top:963px" width="14" height="16" viewBox="0 0 14 16"><path d="M1.2 1.2 L4.6 1.2 L12.8 8 L4.6 14.8 L1.2 14.8 L1.2 11.4 L6 8 L1.2 4.6 Z" fill="#1f73ff" stroke="#0e2fb0" stroke-width="0.9" stroke-linejoin="round"/><path d="M2.3 2.5 L9.4 7" stroke="#c8f0ff" stroke-width="1.8" stroke-linecap="round"/></svg>
<div class="t" style="left:24px;top:964px;font-size:13.5px;letter-spacing:0.44px">abook</div>
<div class="t" style="left:187px;top:964px;font-size:13.5px;letter-spacing:0.46px;color:#0000ff">not installed</div>
<div class="t" style="left:297px;top:964px;font-size:13.5px;letter-spacing:0.44px;color:#0000ff">no change</div>
<div class="t" style="left:387px;top:964px;font-size:13.5px;letter-spacing:0.39px">text-based ncurses address book application</div>
<div style="position:absolute;left:5px;top:981px;width:814px;height:18px;background:#eef5fe"></div>
<svg style="position:absolute;left:7px;top:981px" width="14" height="16" viewBox="0 0 14 16"><path d="M1.2 1.2 L4.6 1.2 L12.8 8 L4.6 14.8 L1.2 14.8 L1.2 11.4 L6 8 L1.2 4.6 Z" fill="#1f73ff" stroke="#0e2fb0" stroke-width="0.9" stroke-linejoin="round"/><path d="M2.3 2.5 L9.4 7" stroke="#c8f0ff" stroke-width="1.8" stroke-linecap="round"/></svg>
<div class="t" style="left:24px;top:982px;font-size:13.5px;letter-spacing:0.41px">aboot-cross</div>
<div class="t" style="left:187px;top:982px;font-size:13.5px;letter-spacing:0.46px;color:#0000ff">not installed</div>
<div class="t" style="left:297px;top:982px;font-size:13.5px;letter-spacing:0.44px;color:#0000ff">no change</div>
<div class="t" style="left:387px;top:982px;font-size:13.5px;letter-spacing:0.20px">utility to create bootable ISO-Images for Linux/Alpha</div>
<div style="position:absolute;left:819px;top:298px;width:15px;height:702px;background:repeating-conic-gradient(#e6e6e6 0 25%,#fbfbfb 0 50%) 0 0/2px 2px"></div>
<div style="position:absolute;left:819px;top:299px;width:16px;height:16px;box-sizing:border-box;border:1px solid #9a9a9a;border-radius:3px;background:linear-gradient(to bottom,#fafafa 0%,#efefef 60%,#dadada 100%)"></div>
<svg style="position:absolute;left:820px;top:299px" width="15" height="15" viewBox="0 0 15 15"><path d="M3.5 9 L11.5 9 L7.5 4.5 Z" fill="#000"/></svg>
<div style="position:absolute;left:819px;top:315px;width:16px;height:26px;box-sizing:border-box;border:1px solid #9a9a9a;border-radius:3px;background:linear-gradient(to bottom,#fafafa 0%,#efefef 60%,#dadada 100%)"></div>
<svg style="position:absolute;left:826px;top:322px" width="2" height="15" viewBox="0 0 2 15"><defs><pattern id="sg" width="2" height="4" patternUnits="userSpaceOnUse"><rect width="2" height="2" fill="#b0b0b0"/><rect x="1" y="1" width="1" height="1" fill="#fff"/></pattern></defs><rect width="2" height="15" fill="url(#sg)"/></svg>
<div style="position:absolute;left:819px;top:967px;width:16px;height:16px;box-sizing:border-box;border:1px solid #9a9a9a;border-radius:3px;background:linear-gradient(to bottom,#fafafa 0%,#efefef 60%,#dadada 100%)"></div>
<svg style="position:absolute;left:820px;top:967px" width="15" height="15" viewBox="0 0 15 15"><path d="M3.5 9 L11.5 9 L7.5 4.5 Z" fill="#000"/></svg>
<div style="position:absolute;left:819px;top:983px;width:16px;height:16px;box-sizing:border-box;border:1px solid #9a9a9a;border-radius:3px;background:linear-gradient(to bottom,#fafafa 0%,#efefef 60%,#dadada 100%)"></div>
<svg style="position:absolute;left:820px;top:983px" width="15" height="15" viewBox="0 0 15 15"><path d="M3.5 5.5 L11.5 5.5 L7.5 10 Z" fill="#000"/></svg>
<svg style="position:absolute;left:839px;top:437px" width="2" height="422" viewBox="0 0 2 422"><defs><pattern id="vd" width="2" height="5" patternUnits="userSpaceOnUse"><rect width="2" height="2" fill="#a8a8a8"/><rect x="1" y="1" width="1" height="1" fill="#fff"/></pattern></defs><rect width="2" height="422" fill="url(#vd)"/></svg>
<div style="position:absolute;left:843px;top:322px;width:267px;height:677px;box-sizing:border-box;border:1px solid #a0a0a0;border-right:none;border-top-left-radius:3px;background:#efefef"></div>
<div style="position:absolute;left:903px;top:300px;width:117px;height:23px;box-sizing:border-box;border:1px solid #9c9c9c;border-bottom:none;border-radius:3px 3px 0 0;background:linear-gradient(to bottom,#f8f8f8 0%,#ececec 60%,#e2e2e2 100%)"></div>
<div style="position:absolute;left:1019px;top:300px;width:59px;height:23px;box-sizing:border-box;border:1px solid #9c9c9c;border-bottom:none;border-radius:3px 3px 0 0;background:linear-gradient(to bottom,#f8f8f8 0%,#ececec 60%,#e2e2e2 100%)"></div>
<div style="position:absolute;left:843px;top:297px;width:61px;height:27px;box-sizing:border-box;border:1px solid #9c9c9c;border-bottom:none;border-radius:3px 3px 0 0;background:linear-gradient(to bottom,#7cb0ea 0,#9cc4f0 2px,#efefef 2px)"></div>
<div class="t" style="left:852px;top:303px;font-size:13.5px;letter-spacing:0.46px">Hio<u>t</u>tu</div>
<div class="t" style="left:913px;top:304px;font-size:13.5px;letter-spacing:0.25px">Yksinker<u>t</u>ainen</div>
<div class="t" style="left:1028px;top:304px;font-size:13.5px;letter-spacing:-0.17px">Kaikki</div>
<div style="position:absolute;left:845px;top:324px;width:265px;height:673px;box-sizing:border-box;border:1px solid #9a9a9a;border-right:none;border-top-left-radius:3px;background:#fff"></div>
<div style="position:absolute;left:846px;top:325px;width:264px;height:22px;background:#ececec"></div>
<div style="position:absolute;left:846px;top:347px;width:264px;height:1px;background:#d6d6d6"></div>
<div class="t" style="left:852px;top:330px;font-size:13.5px;letter-spacing:0.32px">Mahdolliset merkinnät</div>
<div style="position:absolute;left:857px;top:349px;width:1px;height:208px;background-image:repeating-linear-gradient(to bottom,#a0a0a0 0,#a0a0a0 1px,transparent 1px,transparent 2px)"></div>
<svg style="position:absolute;left:853px;top:354px" width="10" height="10" viewBox="0 0 10 10"><path d="M2.8 0.5 H6.2 L8.5 2.8 V6.2 L6.2 8.5 H2.8 L0.5 6.2 V2.8 Z" fill="#fff" stroke="#606060" stroke-width="1"/><path d="M1 3 H8 V3.8 L4.5 7 L1 3.8 Z" fill="#000"/></svg>
<div style="position:absolute;left:863px;top:357px;width:4px;height:1px;background-image:repeating-linear-gradient(to right,#a0a0a0 0,#a0a0a0 1px,transparent 1px,transparent 2px)"></div>
<div class="t" style="left:871px;top:350px;font-size:13.5px;letter-spacing:0.33px">[devel] Software development / prog...</div>
<div style="position:absolute;left:877px;top:366px;width:1px;height:10px;background-image:repeating-linear-gradient(to bottom,#a0a0a0 0,#a0a0a0 1px,transparent 1px,transparent 2px)"></div>
<div style="position:absolute;left:887px;top:366px;width:223px;height:18px;background:#eef5fe"></div>
<div style="position:absolute;left:879px;top:375px;width:8px;height:1px;background-image:repeating-linear-gradient(to right,#a0a0a0 0,#a0a0a0 1px,transparent 1px,transparent 2px)"></div>
<div class="t" style="left:890px;top:368px;font-size:13.5px;letter-spacing:0.26px">[library] Software Libraries</div>
<svg style="position:absolute;left:853px;top:390px" width="10" height="10" viewBox="0 0 10 10"><path d="M2.8 0.5 H6.2 L8.5 2.8 V6.2 L6.2 8.5 H2.8 L0.5 6.2 V2.8 Z" fill="#fff" stroke="#606060" stroke-width="1"/><path d="M1 3 H8 V3.8 L4.5 7 L1 3.8 Z" fill="#000"/></svg>
<div style="position:absolute;left:863px;top:393px;width:4px;height:1px;background-image:repeating-linear-gradient(to right,#a0a0a0 0,#a0a0a0 1px,transparent 1px,transparent 2px)"></div>
<div class="t" style="left:871px;top:386px;font-size:13.5px;letter-spacing:0.39px">[interface] Kind of user interface</div>
<div style="position:absolute;left:877px;top:402px;width:1px;height:28px;background-image:repeating-linear-gradient(to bottom,#a0a0a0 0,#a0a0a0 1px,transparent 1px,transparent 2px)"></div>
<div style="position:absolute;left:887px;top:402px;width:223px;height:18px;background:#eef5fe"></div>
<div style="position:absolute;left:879px;top:411px;width:8px;height:1px;background-image:repeating-linear-gradient(to right,#a0a0a0 0,#a0a0a0 1px,transparent 1px,transparent 2px)"></div>
<div class="t" style="left:890px;top:404px;font-size:13.5px;letter-spacing:0.28px">[commandline] Command line int...</div>
<div style="position:absolute;left:879px;top:429px;width:8px;height:1px;background-image:repeating-linear-gradient(to right,#a0a0a0 0,#a0a0a0 1px,transparent 1px,transparent 2px)"></div>
<div class="t" style="left:890px;top:422px;font-size:13.5px;letter-spacing:0.43px">[x11] X11 user interface</div>
<div style="position:absolute;left:867px;top:438px;width:243px;height:18px;background:#eef5fe"></div>
<svg style="position:absolute;left:853px;top:444px" width="10" height="10" viewBox="0 0 10 10"><path d="M2.8 0.5 H6.2 L8.5 2.8 V6.2 L6.2 8.5 H2.8 L0.5 6.2 V2.8 Z" fill="#fff" stroke="#606060" stroke-width="1"/><path d="M1 3 H8 V3.8 L4.5 7 L1 3.8 Z" fill="#000"/></svg>
<div style="position:absolute;left:863px;top:447px;width:4px;height:1px;background-image:repeating-linear-gradient(to right,#a0a0a0 0,#a0a0a0 1px,transparent 1px,transparent 2px)"></div>
<div class="t" style="left:871px;top:440px;font-size:13.5px;letter-spacing:0.35px">[role] Role of the package in the sys...</div>
<div style="position:absolute;left:877px;top:456px;width:1px;height:46px;background-image:repeating-linear-gradient(to bottom,#a0a0a0 0,#a0a0a0 1px,transparent 1px,transparent 2px)"></div>
<div style="position:absolute;left:879px;top:465px;width:8px;height:1px;background-image:repeating-linear-gradient(to right,#a0a0a0 0,#a0a0a0 1px,transparent 1px,transparent 2px)"></div>
<div class="t" style="left:890px;top:458px;font-size:13.5px;letter-spacing:0.37px">[content:data] (Auxiliary) Applicat...</div>
<div style="position:absolute;left:887px;top:474px;width:223px;height:18px;background:#eef5fe"></div>
<div style="position:absolute;left:879px;top:483px;width:8px;height:1px;background-image:repeating-linear-gradient(to right,#a0a0a0 0,#a0a0a0 1px,transparent 1px,transparent 2px)"></div>
<div class="t" style="left:890px;top:476px;font-size:13.5px;letter-spacing:0.21px">[sw:devel-lib] (Software) Develop...</div>
<div style="position:absolute;left:879px;top:501px;width:8px;height:1px;background-image:repeating-linear-gradient(to right,#a0a0a0 0,#a0a0a0 1px,transparent 1px,transparent 2px)"></div>
<div class="t" style="left:890px;top:494px;font-size:13.5px;letter-spacing:0.32px">[sw:utility] (Software) Utilities and...</div>
<div style="position:absolute;left:867px;top:510px;width:243px;height:18px;background:#eef5fe"></div>
<svg style="position:absolute;left:853px;top:516px" width="10" height="10" viewBox="0 0 10 10"><path d="M2.8 0.5 H6.2 L8.5 2.8 V6.2 L6.2 8.5 H2.8 L0.5 6.2 V2.8 Z" fill="#fff" stroke="#606060" stroke-width="1"/><path d="M1 3 H8 V3.8 L4.5 7 L1 3.8 Z" fill="#000"/></svg>
<div style="position:absolute;left:863px;top:519px;width:4px;height:1px;background-image:repeating-linear-gradient(to right,#a0a0a0 0,#a0a0a0 1px,transparent 1px,transparent 2px)"></div>
<div class="t" style="left:871px;top:512px;font-size:13.5px;letter-spacing:0.47px">[uitoolkit] User interface toolkit</div>
<div style="position:absolute;left:877px;top:528px;width:1px;height:10px;background-image:repeating-linear-gradient(to bottom,#a0a0a0 0,#a0a0a0 1px,transparent 1px,transparent 2px)"></div>
<div style="position:absolute;left:879px;top:537px;width:8px;height:1px;background-image:repeating-linear-gradient(to right,#a0a0a0 0,#a0a0a0 1px,transparent 1px,transparent 2px)"></div>
<div class="t" style="left:890px;top:530px;font-size:13.5px;letter-spacing:0.27px">[gtk] GTK user interface</div>
<div style="position:absolute;left:867px;top:546px;width:243px;height:18px;background:#eef5fe"></div>
<svg style="position:absolute;left:853px;top:552px" width="10" height="10" viewBox="0 0 10 10"><path d="M2.8 0.5 H6.2 L8.5 2.8 V6.2 L6.2 8.5 H2.8 L0.5 6.2 V2.8 Z" fill="#fff" stroke="#606060" stroke-width="1"/><path d="M1 3 H8 V3.8 L4.5 7 L1 3.8 Z" fill="#000"/></svg>
<div style="position:absolute;left:863px;top:555px;width:4px;height:1px;background-image:repeating-linear-gradient(to right,#a0a0a0 0,#a0a0a0 1px,transparent 1px,transparent 2px)"></div>
<div class="t" style="left:871px;top:548px;font-size:13.5px;letter-spacing:0.75px">[x11]</div>
<div style="position:absolute;left:877px;top:564px;width:1px;height:10px;background-image:repeating-linear-gradient(to bottom,#a0a0a0 0,#a0a0a0 1px,transparent 1px,transparent 2px)"></div>
<div style="position:absolute;left:879px;top:573px;width:8px;height:1px;background-image:repeating-linear-gradient(to right,#a0a0a0 0,#a0a0a0 1px,transparent 1px,transparent 2px)"></div>
<div class="t" style="left:890px;top:566px;font-size:13.5px;letter-spacing:0.25px">[application] X-Windows applications</div>
<div style="position:absolute;left:5px;top:1004px;width:167px;height:19px;box-sizing:border-box;border:1px solid #c6c6c6;border-radius:2px;background:#ececec"></div>
<div class="t" style="left:7px;top:1008px;font-size:11.5px;letter-spacing:0.64px">Asenna 0, päivitä 0, poista 0</div>
<div style="position:absolute;left:174px;top:1004px;width:296px;height:19px;box-sizing:border-box;border:1px solid #c6c6c6;border-radius:2px;background:#ececec"></div>
<div class="t" style="left:176px;top:1008px;font-size:11.5px;letter-spacing:0.67px">1839 asennettu, 7 päivitettävissä, 18374 saatavilla</div>
<div style="position:absolute;left:471px;top:1004px;width:142px;height:19px;box-sizing:border-box;border:1px solid #c6c6c6;border-radius:2px;background:#ececec"></div>
<div class="t" style="left:473px;top:1008px;font-size:11.5px;letter-spacing:0.72px">lataus: 0B, asennus: 0B</div>
<div style="position:absolute;left:1110px;top:0px;width:14px;height:1024px;background:#000"></div>
</body></html>
